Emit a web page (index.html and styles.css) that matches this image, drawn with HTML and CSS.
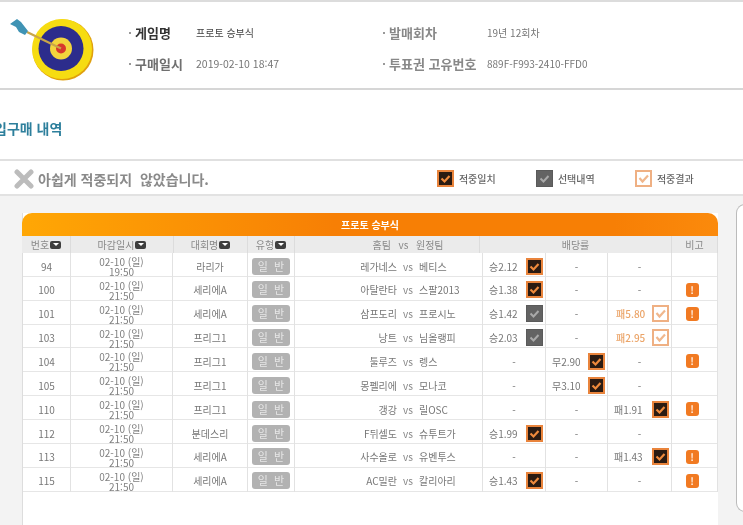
FILE: index.html
```html
<!DOCTYPE html>
<html lang="ko">
<head>
<meta charset="utf-8">
<title>프로토 승부식</title>
<link rel="stylesheet" href="styles.css">
</head>
<body>
<svg class="defs" width="0" height="0" aria-hidden="true">
  <symbol id="ck-hit" viewBox="0 0 17 17"><rect x="1" y="1" width="15" height="15" fill="#2b1b12" stroke="#e9843c" stroke-width="2"/><path d="M4.500 8.500l3 3 5-5.500" fill="none" stroke="#ef8a3c" stroke-width="2.200"/></symbol>
  <symbol id="ck-sel" viewBox="0 0 17 17"><rect x=".5" y=".5" width="16" height="16" fill="#636363" stroke="#5a5a5a"/><path d="M4.500 8.500l3 3 5-5.500" fill="none" stroke="#a9a9a9" stroke-width="2"/></symbol>
  <symbol id="ck-res" viewBox="0 0 17 17"><rect x="1" y="1" width="15" height="15" fill="#fff" stroke="#efb083" stroke-width="2"/><path d="M4.500 8l3 3.500 5.500-6" fill="none" stroke="#f0b78d" stroke-width="2.200"/></symbol>
</svg>
<div class="page">
  <div class="topline"></div>
  <header class="info">
    <svg class="target" width="100" height="72" viewBox="0 0 100 72" aria-hidden="true">
      <circle cx="53" cy="39" r="30.500" fill="#e0a00e"/>
      <circle cx="52" cy="38" r="30" fill="#f6dc12"/>
      <circle cx="51" cy="37.500" r="22.500" fill="#2c2c8c"/>
      <circle cx="51" cy="37.500" r="11" fill="#f3d43c"/>
      <circle cx="51" cy="37.500" r="5" fill="#d8382c"/>
      <path d="M17 21L51 37.500" stroke="#c9a548" stroke-width="2.200"/>
      <path d="M0 13l7-5 4 3 7 9-3 4-6-3-3-5z" fill="#3f93b4"/>
    </svg>
    <div class="facts">
      <div class="fact"><span class="fact-label strong">게임명</span><span class="fact-value dark">프로토 승부식</span></div>
      <div class="fact"><span class="fact-label wide">발매회차</span><span class="fact-value">19년 12회차</span></div>
      <div class="fact"><span class="fact-label">구매일시</span><span class="fact-value big">2019-02-10 18:47</span></div>
      <div class="fact"><span class="fact-label wide">투표권 고유번호</span><span class="fact-value">889F-F993-2410-FFD0</span></div>
    </div>
  </header>
  <section class="title-band"><h1>입구매 내역</h1></section>
  <section class="notice">
    <svg class="x-icon" width="20" height="20" viewBox="0 0 20 20" aria-hidden="true"><path d="M3 3l14 14M17 3L3 17" stroke="#bcbcbc" stroke-width="5" stroke-linecap="round"/></svg>
    <span class="notice-text">아쉽게 적중되지&nbsp; 않았습니다.</span>
    <div class="legend">
      <div class="legend-item"><svg class="ck"><use href="#ck-hit"/></svg><span>적중일치</span></div>
      <div class="legend-item"><svg class="ck"><use href="#ck-sel"/></svg><span>선택내역</span></div>
      <div class="legend-item"><svg class="ck"><use href="#ck-res"/></svg><span>적중결과</span></div>
    </div>
  </section>
  <main class="stage">
    <div class="card">
      <div class="card-title">프로토 승부식</div>
      <div class="head-row">
        <div>번호<i class="sort"></i></div>
        <div>마감일시<i class="sort"></i></div>
        <div>대회명<i class="sort"></i></div>
        <div>유형<i class="sort"></i></div>
        <div class="head-teams">홈팀 &nbsp;vs&nbsp; 원정팀</div>
        <div>배당률</div>
        <div class="head-note">비고</div>
      </div>

      <div class="row">
        <div>94</div><div class="date">02-10 (일)<br>19:50</div><div>라리가</div><div><span class="badge">일 반</span></div>
        <div class="teams"><span>레가네스</span><em>vs</em><span>베티스</span></div>
        <div class="odd"><span>승2.12</span><svg class="ck"><use href="#ck-hit"/></svg></div><div>-</div><div>-</div><div class="note"></div>
      </div>
      <div class="row">
        <div>100</div><div class="date">02-10 (일)<br>21:50</div><div>세리에A</div><div><span class="badge">일 반</span></div>
        <div class="teams"><span>아탈란타</span><em>vs</em><span>스팔2013</span></div>
        <div class="odd"><span>승1.38</span><svg class="ck"><use href="#ck-hit"/></svg></div><div>-</div><div>-</div><div class="note"><b class="alert">!</b></div>
      </div>
      <div class="row">
        <div>101</div><div class="date">02-10 (일)<br>21:50</div><div>세리에A</div><div><span class="badge">일 반</span></div>
        <div class="teams"><span>삼프도리</span><em>vs</em><span>프로시노</span></div>
        <div class="odd"><span>승1.42</span><svg class="ck"><use href="#ck-sel"/></svg></div><div>-</div><div class="odd won"><span>패5.80</span><svg class="ck"><use href="#ck-res"/></svg></div><div class="note"><b class="alert">!</b></div>
      </div>
      <div class="row">
        <div>103</div><div class="date">02-10 (일)<br>21:50</div><div>프리그1</div><div><span class="badge">일 반</span></div>
        <div class="teams"><span>낭트</span><em>vs</em><span>님올랭피</span></div>
        <div class="odd"><span>승2.03</span><svg class="ck"><use href="#ck-sel"/></svg></div><div>-</div><div class="odd won"><span>패2.95</span><svg class="ck"><use href="#ck-res"/></svg></div><div class="note"></div>
      </div>
      <div class="row">
        <div>104</div><div class="date">02-10 (일)<br>21:50</div><div>프리그1</div><div><span class="badge">일 반</span></div>
        <div class="teams"><span>툴루즈</span><em>vs</em><span>렝스</span></div>
        <div>-</div><div class="odd"><span>무2.90</span><svg class="ck"><use href="#ck-hit"/></svg></div><div>-</div><div class="note"><b class="alert">!</b></div>
      </div>
      <div class="row">
        <div>105</div><div class="date">02-10 (일)<br>21:50</div><div>프리그1</div><div><span class="badge">일 반</span></div>
        <div class="teams"><span>몽펠리에</span><em>vs</em><span>모나코</span></div>
        <div>-</div><div class="odd"><span>무3.10</span><svg class="ck"><use href="#ck-hit"/></svg></div><div>-</div><div class="note"></div>
      </div>
      <div class="row">
        <div>110</div><div class="date">02-10 (일)<br>21:50</div><div>프리그1</div><div><span class="badge">일 반</span></div>
        <div class="teams"><span>갱강</span><em>vs</em><span>릴OSC</span></div>
        <div>-</div><div>-</div><div class="odd"><span>패1.91</span><svg class="ck"><use href="#ck-hit"/></svg></div><div class="note"><b class="alert">!</b></div>
      </div>
      <div class="row">
        <div>112</div><div class="date">02-10 (일)<br>21:50</div><div>분데스리</div><div><span class="badge">일 반</span></div>
        <div class="teams"><span>F뒤셀도</span><em>vs</em><span>슈투트가</span></div>
        <div class="odd"><span>승1.99</span><svg class="ck"><use href="#ck-hit"/></svg></div><div>-</div><div>-</div><div class="note"></div>
      </div>
      <div class="row">
        <div>113</div><div class="date">02-10 (일)<br>21:50</div><div>세리에A</div><div><span class="badge">일 반</span></div>
        <div class="teams"><span>사수올로</span><em>vs</em><span>유벤투스</span></div>
        <div>-</div><div>-</div><div class="odd"><span>패1.43</span><svg class="ck"><use href="#ck-hit"/></svg></div><div class="note"><b class="alert">!</b></div>
      </div>
      <div class="row">
        <div>115</div><div class="date">02-10 (일)<br>21:50</div><div>세리에A</div><div><span class="badge">일 반</span></div>
        <div class="teams"><span>AC밀란</span><em>vs</em><span>칼리아리</span></div>
        <div class="odd"><span>승1.43</span><svg class="ck"><use href="#ck-hit"/></svg></div><div>-</div><div>-</div><div class="note"><b class="alert">!</b></div>
      </div>
    </div>
    <aside class="side-panel"></aside>
  </main>
</div>
</body>
</html>
```

FILE: styles.css
```css
* { box-sizing: border-box; }
html, body { margin: 0; height: 525px; overflow: hidden; background: #fff; }
body { font-family: "Noto Sans CJK KR", "Noto Sans", sans-serif; color: #777; }
.defs { position: absolute; }
.page { width: 743px; height: 525px; overflow: hidden; filter: blur(.55px); }

.topline { height: 2px; background: #dcdcdc; }

.info { height: 88px; border-bottom: 2px solid #d6d6d6; display: flex; padding-top: 9px; padding-left: 10px; }
.target { flex: none; }
.facts { display: grid; grid-template-columns: 254px 1fr; grid-template-rows: 31px 30px; margin-left: 19px; margin-top: 6px; }
.fact { display: flex; align-items: center; }
.fact-label { position: relative; width: 67px; padding-left: 6px; font-size: 13px; font-weight: 700; color: #707070; white-space: nowrap; }
.fact-label::before { content: ""; position: absolute; left: 0; top: 9px; width: 2px; height: 2px; background: #999; }
.fact-label.strong { color: #333; }
.fact-label.wide { width: 104px; color: #888; }
.fact-value { font-size: 10px; color: #777; white-space: nowrap; }
.fact-value.dark { color: #444; }
.fact-value.big { font-size: 10.500px; }

.title-band { height: 71px; border-bottom: 2px solid #e0e0e0; display: flex; align-items: center; overflow: hidden; padding-top: 6px; }
.title-band h1 { margin: 0 0 0 -6px; font-size: 14px; font-weight: 700; color: #2d7f9c; line-height: 1; white-space: nowrap; }

.notice { height: 35px; border-bottom: 2px solid #e2e2e2; display: flex; align-items: center; padding: 2px 0 0 14px; }
.notice-text { margin-left: 4px; font-size: 14px; font-weight: 700; color: #8a8a8a; white-space: nowrap; }
.legend { display: flex; margin-left: 228px; margin-top: -1px; }
.legend-item { display: flex; align-items: center; gap: 5px; width: 99px; font-size: 10px; font-weight: 500; color: #666; }
.ck { width: 17px; height: 17px; flex: none; }

.stage { height: 329px; background: #f3f3f3; display: flex; padding: 17px 0 0 22px; align-items: flex-start; }
.card { width: 696px; height: 330px; flex: none; background: #fff; border-left: 1px solid #ddd; }
.card-title { height: 23px; margin-left: -1px; border-radius: 10px 10px 0 0; background: linear-gradient(90deg, #ffa705, #f77f05 45%, #f77f05 85%, #fb8a0c); color: #fff; font-size: 10px; font-weight: 700; display: flex; align-items: center; justify-content: center; }

.head-row, .row { display: grid; margin-left: -1px; text-align: center; }
.head-row { grid-template-columns: 49px 103px 74px 47px 185px 192px 46px; height: 17px; background: #ebebeb; font-size: 10px; color: #8a8a8a; }
.head-row > div { display: flex; align-items: center; justify-content: center; border-right: 1px solid #dcdcdc; white-space: nowrap; }
.head-row > .head-teams { padding-left: 42px; word-spacing: 1px; }
.sort { position: relative; width: 11px; height: 8px; margin-left: 1px; background: #3e3e3e; border-radius: 2px; }
.sort::after { content: ""; position: absolute; left: 2.500px; top: 2.500px; border: 3px solid transparent; border-top: 3px solid #fff; border-bottom: 0; }

.row { grid-template-columns: 49px 102px 75px 47px 188px 63px 62px 64px 46px; height: 23.870px; font-size: 10px; color: #777; border-bottom: 1px solid #e6e6e6; }
.row > div { display: flex; align-items: center; justify-content: center; border-right: 1px solid #e2e2e2; white-space: nowrap; padding-top: 2px; }
.row > div:first-child { border-left: 1px solid #ddd; }
.row > .date { display: block; line-height: 10px; padding-top: 4px; color: #808080; }
.row > .teams { display: grid; grid-template-columns: 102px 22px 1fr; align-items: center; }
.teams span:first-child { text-align: right; }
.teams span:last-child { text-align: left; }
.teams em { font-style: normal; color: #888; }
.row > .odd { justify-content: space-between; padding: 2px 2px 0 6px; }
.row > .won { color: #eba468; font-weight: 500; padding-left: 8px; }
.row > .note { padding-right: 5px; }
.badge { display: block; width: 38px; height: 17px; line-height: 17px; border-radius: 3px; background: #b2b2b2; color: #e6e6e6; font-size: 11px; word-spacing: 3px; }
.alert { display: block; width: 13px; height: 14px; line-height: 14px; border-radius: 3px; background: #f17a22; color: #ffe9d8; font-size: 10px; }

.side-panel { width: 20px; height: 308px; margin-left: 18px; margin-top: -9px; flex: none; background: #fff; border: 1px solid #bbb; border-right: 0; border-radius: 9px 0 0 9px; }
```
